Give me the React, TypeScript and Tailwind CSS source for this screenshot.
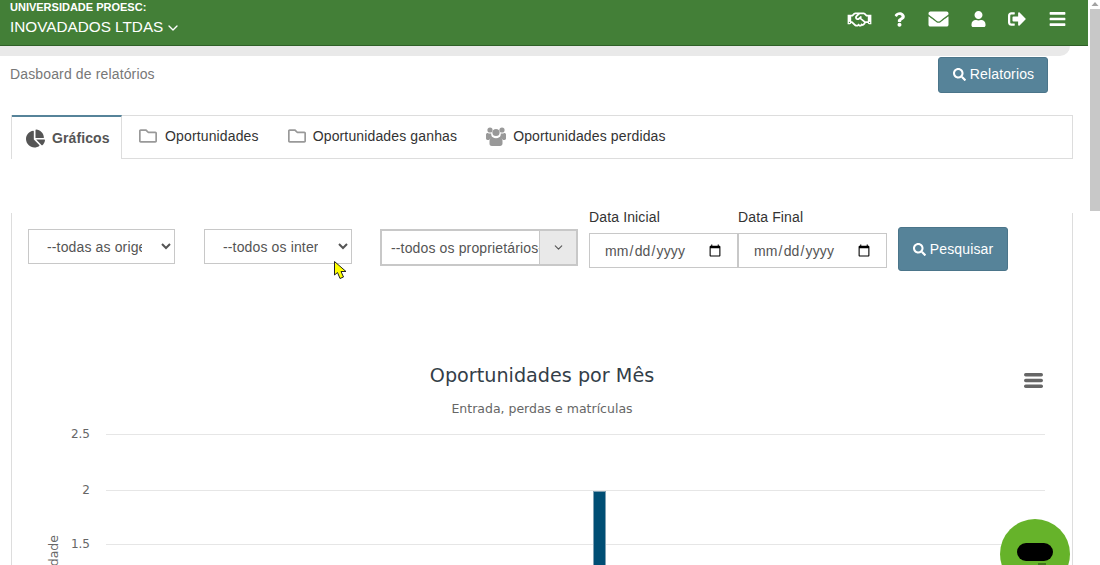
import { FaBars, FaChartPie, FaEnvelope, FaQuestion, FaRegFolder, FaRegHandshake, FaSearch, FaSignOutAlt, FaUser } from 'react-icons/fa'
import { ChevronDown } from 'lucide-react'

const gridLines = [
  { label: '2.5', height: 'h-[56px]', bar: false },
  { label: '2', height: 'h-[54px]', bar: true },
  { label: '1.5', height: 'h-[54px]', bar: false },
]

function UsersIcon() {
  return (
    <svg className="ml-[29px] h-[20px] w-[20px] text-[#999]" viewBox="0 0 20 20" fill="currentColor">
      <circle cx="4" cy="4" r="2.6" />
      <circle cx="16" cy="4" r="2.6" />
      <circle cx="10" cy="6.5" r="3.6" />
      <path d="M0 8.5C0 7.5.8 7 1.8 7c.9.6 2.3.8 3.4.4-.1 1.500.4 3 1.500 4-1.600.4-2.900 1.300-3.700 2.600H1.500C.6 14 0 13.400 0 12.600Z" />
      <path d="M20 8.5c0-1-.8-1.500-1.800-1.500-.9.6-2.300.8-3.400.4.1 1.500-.4 3-1.500 4 1.600.4 2.900 1.300 3.700 2.600h1.500c.9 0 1.500-.6 1.500-1.400Z" />
      <path d="M6.500 11c1 .8 2.200 1.200 3.500 1.200s2.500-.4 3.500-1.200c1.900.3 3 1.800 3 4v2.500c0 1.400-1 2.500-2.500 2.500h-8C4 20 3.500 18.900 3.500 17.500V15c0-2.200 1.100-3.700 3-4Z" />
    </svg>
  )
}

export default function App() {
  return (
    <div className="relative flex h-[565px] w-[1100px] overflow-hidden bg-white font-['Liberation_Sans',sans-serif] text-sm tracking-[0.14px] text-[#333]">
      <div className="w-[1088px] shrink-0">
        {/* Top bar */}
        <header className="flex h-[46px] items-start justify-between border-b border-[#2f5f27] bg-[#437f37] pl-[10px] pr-[22px] tracking-normal text-white">
          <div>
            <div className="mt-px text-[11px] leading-[13px] font-bold">UNIVERSIDADE PROESC:</div>
            <div className="mt-[4px] flex items-center gap-[2px] text-[15.3px] leading-[18px]">
              INOVADADOS LTDAS
              <ChevronDown className="mt-px h-[16px] w-[16px]" />
            </div>
          </div>
          <div className="mt-[9px] flex items-center text-white">
            <FaRegHandshake className="h-[19px] w-[25px]" />
            <FaQuestion className="ml-[22px] h-[15px] w-[11px]" />
            <FaEnvelope className="ml-[23px] h-[20px] w-[21px]" />
            <FaUser className="ml-[22px] h-[16px] w-[15px]" />
            <FaSignOutAlt className="ml-[22px] h-[18px] w-[18px]" />
            <FaBars className="ml-[23px] h-[18px] w-[17px]" />
          </div>
        </header>
        <div className="mr-[18px] h-[10px] rounded-br-[14px] bg-[#e9e9e9]" />

        {/* Page title */}
        <div className="flex h-[59px] items-start justify-between pl-[10px] pr-[40px]">
          <span className="mt-[9px] text-[14px] leading-[18px] text-[#777]">Dasboard de relatórios</span>
          <button className="mt-px flex h-[36px] w-[110px] items-center justify-center gap-[4px] rounded-[3px] border border-[#4b758a] bg-[#568399] pb-[2px] pl-[1px] text-[14px] text-white">
            <FaSearch className="h-[13px] w-[13px]" />
            Relatorios
          </button>
        </div>

        {/* Tabs */}
        <nav className="ml-[11px] mr-[15px] flex h-[44px] border border-[#ddd]">
          <div className="-mb-px -mt-px flex h-[44px] w-[110px] items-center gap-[7px] border-t-2 border-r border-[#ddd] border-t-[#568399] bg-white pl-[14px] font-bold tracking-[0.1px] text-[#555]">
            <FaChartPie className="h-[19px] w-[19px]" />
            <span>Gráficos</span>
          </div>
          <div className="flex items-center pb-[2px]">
            <FaRegFolder className="ml-[17px] h-[18px] w-[18px] text-[#999]" />
            <span className="ml-[8px]">Oportunidades</span>
            <FaRegFolder className="ml-[29px] h-[18px] w-[18px] text-[#999]" />
            <span className="ml-[7px]">Oportunidades ganhas</span>
            <UsersIcon />
            <span className="ml-[7px]">Oportunidades perdidas</span>
          </div>
        </nav>

        {/* Panel */}
        <section className="ml-[11px] mr-[15px] mt-[54px] h-[352px] border-x border-[#ddd]">
          <div className="flex items-start pl-[16px]">
            <select className="mt-[16px] h-[35px] w-[147px] border border-[#c8c8c8] bg-white pl-[14px] pr-[16px] text-[14px] text-[#555]">
              <option>--todas as origens</option>
            </select>
            <select className="ml-[29px] mt-[16px] h-[35px] w-[148px] border border-[#c8c8c8] bg-white pl-[14px] pr-[17px] text-[14px] text-[#555]">
              <option>--todos os interesses</option>
            </select>
            <div className="ml-[28px] mt-[16px] flex h-[37px] w-[198px] border-2 border-[#c8c8c8] text-[14px] text-[#555]">
              <span className="w-[157px] overflow-hidden pl-[9px] leading-[35px] whitespace-nowrap">--todos os proprietários--</span>
              <span className="flex flex-1 items-center justify-center border-l border-[#c8c8c8] bg-[#e9e9e9]">
                <ChevronDown className="h-[13px] w-[13px] text-[#555]" />
              </span>
            </div>
            <div className="-mt-[6px] ml-[11px] flex">
              <label className="w-[149px]">
                <div className="mb-[6px] h-[20px] leading-[20px]">Data Inicial</div>
                <input type="date" className="h-[35px] w-[149px] border border-[#c8c8c8] pl-[14px] pr-[13px] text-[14px] text-[#555]" />
              </label>
              <label className="w-[149px]">
                <div className="mb-[6px] h-[20px] leading-[20px]">Data Final</div>
                <input type="date" className="h-[35px] w-[149px] border border-[#c8c8c8] pl-[14px] pr-[13px] text-[14px] text-[#555]" />
              </label>
            </div>
            <button className="ml-[11px] mt-[14px] flex h-[44px] w-[110px] items-center justify-center gap-[4px] rounded-[3px] border border-[#4b758a] bg-[#568399] text-[14px] text-white">
              <FaSearch className="h-[13px] w-[13px]" />
              Pesquisar
            </button>
          </div>

          {/* Chart */}
          <div className="relative mt-[93px] font-['DejaVu_Sans',sans-serif] tracking-normal">
            <div className="text-center text-[19.2px] leading-[24px] text-[#333e48]">Oportunidades por Mês</div>
            <div className="mt-[14px] text-center text-[12.5px] leading-[14px] text-[#666]">Entrada, perdas e matrículas</div>
            <svg className="absolute right-[29px] top-[9px] text-[#666]" width="19" height="15" viewBox="0 0 19 15" fill="currentColor">
              <rect y="0" width="19" height="3.4" rx="1.700" />
              <rect y="5.800" width="19" height="3.4" rx="1.700" />
              <rect y="11.600" width="19" height="3.4" rx="1.700" />
            </svg>
            <div className="ml-[94px] mr-[27px] mt-[18px]">
              {gridLines.map(line => (
                <div key={line.label} className={`relative border-t border-[#e6e6e6] ${line.height}`}>
                  <span className="absolute -left-[38px] -top-[8px] w-[22px] text-right text-[12px] leading-[14px] text-[#666]">{line.label}</span>
                  {line.bar && <div className="absolute left-[487px] top-0 z-10 h-[120px] w-[13px] border-x border-t border-[#7fa0b3] bg-[#004e74]" />}
                </div>
              ))}
              <span className="absolute left-[35px] top-[244px] origin-top-left -rotate-90 text-[12.5px] leading-[14px] whitespace-nowrap text-[#666]">Quantidade</span>
            </div>
          </div>
        </section>
      </div>

      {/* Scrollbar */}
      <div className="flex w-[12px] flex-col items-end">
        <svg className="mr-[1px] mt-[1px] shrink-0" width="8" height="6" viewBox="0 0 8 6">
          <path d="M4 1 L7.500 5 L.500 5 Z" fill="#a3a3a3" />
        </svg>
        <div className="mt-[2px] h-[202px] w-[10px] bg-[#c8c8c8]" />
      </div>

      {/* Mouse cursor */}
      <svg className="absolute left-[334px] top-[261px]" width="14" height="19" viewBox="0 0 14 19">
        <path d="M.5 .5 L.5 14 L3.500 11.500 L6 17.500 L9.500 16 L7 10.500 L12 10.500 Z" fill="#ffff00" stroke="#222" strokeWidth="1" />
      </svg>

      {/* Chat button */}
      <div className="absolute left-[1000px] top-[519px] flex h-[70px] w-[70px] justify-center rounded-full bg-[#66b32a] pt-[24px]">
        <div className="h-[18px] w-[36px] rounded-[9px] bg-black" />
        <div className="absolute left-[38px] top-[44px] h-[2px] w-[8px] bg-[#3f7a1a]" />
      </div>
    </div>
  )
}
